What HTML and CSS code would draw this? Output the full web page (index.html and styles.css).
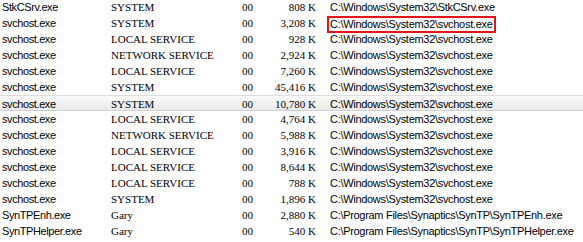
FILE: index.html
```html
<!DOCTYPE html>
<html>
<head>
<meta charset="utf-8">
<link rel="stylesheet" href="styles.css">
</head>
<body>
<div class="list">
  <div class="row"><span class="name">StkCSrv.exe</span><span class="user">SYSTEM</span><span class="cpu">00</span><span class="mem">808 K</span><span class="path"><span class="ptext">C:\Windows\System32\StkCSrv.exe</span></span></div>
  <div class="row"><span class="name">svchost.exe</span><span class="user">SYSTEM</span><span class="cpu">00</span><span class="mem">3,208 K</span><span class="path"><span class="ptext marked">C:\Windows\System32\svchost.exe</span></span></div>
  <div class="row"><span class="name">svchost.exe</span><span class="user">LOCAL SERVICE</span><span class="cpu">00</span><span class="mem">928 K</span><span class="path"><span class="ptext">C:\Windows\System32\svchost.exe</span></span></div>
  <div class="row"><span class="name">svchost.exe</span><span class="user">NETWORK SERVICE</span><span class="cpu">00</span><span class="mem">2,924 K</span><span class="path"><span class="ptext">C:\Windows\System32\svchost.exe</span></span></div>
  <div class="row"><span class="name">svchost.exe</span><span class="user">LOCAL SERVICE</span><span class="cpu">00</span><span class="mem">7,260 K</span><span class="path"><span class="ptext">C:\Windows\System32\svchost.exe</span></span></div>
  <div class="row"><span class="name">svchost.exe</span><span class="user">SYSTEM</span><span class="cpu">00</span><span class="mem">45,416 K</span><span class="path"><span class="ptext">C:\Windows\System32\svchost.exe</span></span></div>
  <div class="row selected"><span class="name">svchost.exe</span><span class="user">SYSTEM</span><span class="cpu">00</span><span class="mem">10,780 K</span><span class="path"><span class="ptext">C:\Windows\System32\svchost.exe</span></span></div>
  <div class="row"><span class="name">svchost.exe</span><span class="user">LOCAL SERVICE</span><span class="cpu">00</span><span class="mem">4,764 K</span><span class="path"><span class="ptext">C:\Windows\System32\svchost.exe</span></span></div>
  <div class="row"><span class="name">svchost.exe</span><span class="user">NETWORK SERVICE</span><span class="cpu">00</span><span class="mem">5,988 K</span><span class="path"><span class="ptext">C:\Windows\System32\svchost.exe</span></span></div>
  <div class="row"><span class="name">svchost.exe</span><span class="user">LOCAL SERVICE</span><span class="cpu">00</span><span class="mem">3,916 K</span><span class="path"><span class="ptext">C:\Windows\System32\svchost.exe</span></span></div>
  <div class="row"><span class="name">svchost.exe</span><span class="user">LOCAL SERVICE</span><span class="cpu">00</span><span class="mem">8,644 K</span><span class="path"><span class="ptext">C:\Windows\System32\svchost.exe</span></span></div>
  <div class="row"><span class="name">svchost.exe</span><span class="user">LOCAL SERVICE</span><span class="cpu">00</span><span class="mem">788 K</span><span class="path"><span class="ptext">C:\Windows\System32\svchost.exe</span></span></div>
  <div class="row"><span class="name">svchost.exe</span><span class="user">SYSTEM</span><span class="cpu">00</span><span class="mem">1,896 K</span><span class="path"><span class="ptext">C:\Windows\System32\svchost.exe</span></span></div>
  <div class="row"><span class="name">SynTPEnh.exe</span><span class="user">Gary</span><span class="cpu">00</span><span class="mem">2,880 K</span><span class="path"><span class="ptext">C:\Program Files\Synaptics\SynTP\SynTPEnh.exe</span></span></div>
  <div class="row"><span class="name">SynTPHelper.exe</span><span class="user">Gary</span><span class="cpu">00</span><span class="mem">540 K</span><span class="path"><span class="ptext">C:\Program Files\Synaptics\SynTP\SynTPHelper.exe</span></span></div>
</div>
</body>
</html>
```

FILE: styles.css
```css
html, body {
  margin: 0;
  padding: 0;
  background: #ffffff;
  overflow: hidden;
}

.list {
  margin-top: -1px;
  color: #000000;
}

.row {
  display: grid;
  grid-template-columns: 109px 131px 14px 62px 1fr;
  align-items: center;
  height: 16px;
  padding-left: 2px;
  box-sizing: border-box;
  white-space: nowrap;
}

.row.selected {
  background: linear-gradient(#fbfbfb, #e9e9e9);
  border-top: 1px solid #dedede;
  border-bottom: 1px solid #d2d2d2;
}

.name {
  font-family: "Liberation Sans", Arial, sans-serif;
  font-size: 11px;
  letter-spacing: -0.4px;
  line-height: 16px;
}

.user, .cpu, .mem {
  font-family: "Liberation Serif", "Times New Roman", serif;
  font-size: 11px;
  line-height: 16px;
}

.mem {
  text-align: right;
  padding-right: 2px;
}

.path {
  padding-left: 9px;
  display: flex;
  align-items: center;
  height: 16px;
}

.ptext {
  font-family: "Liberation Sans", Arial, sans-serif;
  font-size: 11px;
  letter-spacing: -0.3px;
  line-height: 13px;
  display: inline-block;
  padding: 0 2px 0 1px;
  border: 2px solid transparent;
}

.ptext.marked {
  border-color: #e4141b;
  margin-top: 2px;
}
```
